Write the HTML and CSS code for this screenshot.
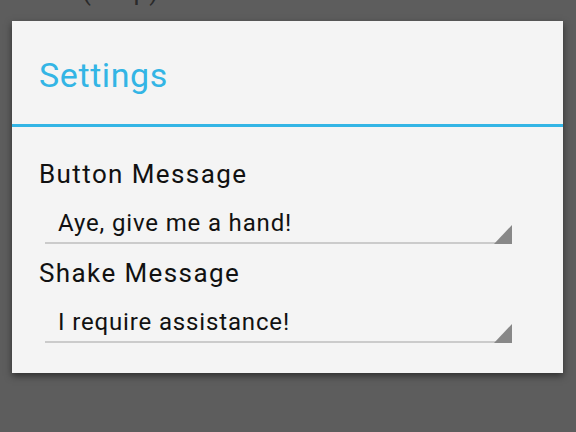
FILE: index.html
```html
<!DOCTYPE html>
<html>
<head>
<meta charset="utf-8">
<link rel="stylesheet" href="styles.css">
</head>
<body>
<div class="behind"><span class="behind-text">(Help)</span></div>
<div class="dialog">
  <div class="dialog-header">
    <div class="dialog-title">Settings</div>
  </div>
  <div class="dialog-divider"></div>
  <div class="dialog-body">
    <div class="pref">
      <div class="pref-label">Button Message</div>
      <div class="pref-field">
        <span class="pref-value">Aye, give me a hand!</span>
        <span class="pref-corner"></span>
      </div>
    </div>
    <div class="pref">
      <div class="pref-label">Shake Message</div>
      <div class="pref-field">
        <span class="pref-value">I require assistance!</span>
        <span class="pref-corner"></span>
      </div>
    </div>
  </div>
</div>
</body>
</html>
```
FILE: styles.css
```css
html, body {
  margin: 0;
  padding: 0;
}
body {
  width: 576px;
  height: 432px;
  overflow: hidden;
  background: #5d5d5d;
  font-family: Roboto, "Noto Sans", sans-serif;
}
.behind {
  height: 21px;
  overflow: hidden;
  padding-left: 82px;
}
.behind-text {
  display: block;
  font-size: 26px;
  line-height: 26px;
  margin-top: -22px;
  color: #2a2a2a;
  letter-spacing: 1px;
}
.dialog {
  margin-left: 12px;
  width: 551px;
  height: 352px;
  background: #f4f4f4;
  box-shadow: 0 3px 7px rgba(0, 0, 0, 0.5);
}
.dialog-header {
  height: 103px;
  box-sizing: border-box;
  padding: 34px 0 0 27px;
}
.dialog-title {
  font-size: 34px;
  line-height: 40px;
  letter-spacing: 0.6px;
  color: #33b5e5;
}
.dialog-divider {
  height: 3px;
  background: #33b5e5;
}
.dialog-body {
  padding: 31px 0 0 27px;
  display: flex;
  flex-direction: column;
  gap: 13px;
}
.pref-label {
  font-size: 26px;
  line-height: 32px;
  letter-spacing: 1.4px;
  color: #111;
}
.pref-field {
  margin-left: 6px;
  width: 467px;
  height: 52px;
  box-sizing: content-box;
  border-bottom: 2px solid #cbcbcb;
  display: flex;
  align-items: flex-end;
}
.pref-value {
  flex: 1;
  padding: 0 0 4px 13px;
  font-size: 24px;
  line-height: 30px;
  letter-spacing: 0.85px;
  color: #111;
}
.pref-corner {
  width: 18px;
  height: 19px;
  margin-bottom: -2px;
  background: #888888;
  clip-path: polygon(100% 0, 100% 100%, 0 100%);
}
```
